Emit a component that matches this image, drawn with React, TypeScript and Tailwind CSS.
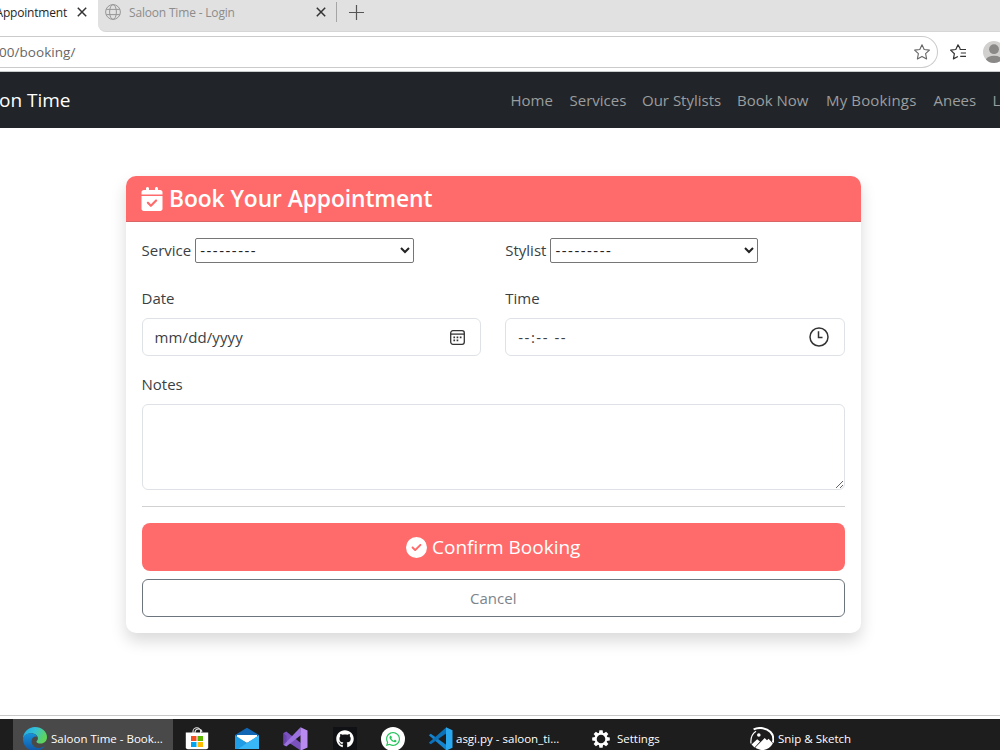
import type { ReactNode } from "react";
import { FaCalendarCheck, FaCircleCheck, FaGithub, FaWhatsapp } from "react-icons/fa6";

const NAV_LINKS = [
  { label: "Home", width: "w-[43px]" },
  { label: "Services", width: "w-[56.500px]" },
  { label: "Our Stylists", width: "w-[79px]" },
  { label: "Book Now", width: "w-[73px]" },
  { label: "My Bookings", width: "w-[91.500px] tracking-[0.150px]" },
  { label: "Anees", width: "w-[43px]" },
  { label: "L", width: "w-[10px]" },
];

function CloseIcon() {
  return (
    <svg className="h-[10px] w-[10px] shrink-0" viewBox="0 0 10 10" fill="none" stroke="#333" strokeWidth="1.5">
      <path d="M.8.8 9.2 9.2M9.2.8.8 9.2" />
    </svg>
  );
}

function GlobeIcon() {
  return (
    <svg className="h-4 w-4 shrink-0" viewBox="0 0 16 16" fill="none" stroke="#979797" strokeWidth="1">
      <circle cx="8" cy="8" r="7.4" />
      <ellipse cx="8" cy="8" rx="3.4" ry="7.4" />
      <path d="M1.2 5.4h13.6M1.2 10.6h13.6" />
    </svg>
  );
}

function TabStrip() {
  return (
    <div className="flex h-8 bg-white">
      <div className="flex h-8 w-[98px] shrink-0 items-start justify-end bg-white pr-[11px] text-[#1f1f1f]">
        <span className="mt-[4px] mr-[10px] text-[12px] leading-[18px] tracking-[-0.2px] whitespace-nowrap">Appointment</span>
        <span className="mt-[7px]">
          <CloseIcon />
        </span>
      </div>
      <div className="flex h-8 flex-1 items-start rounded-bl-[8px] border-b border-[#d6d6d6] bg-[#e1e1e1] pl-[7px]">
        <span className="mt-1">
          <GlobeIcon />
        </span>
        <span className="mt-[4px] ml-[8px] w-[187px] text-[12px] leading-[18px] tracking-[-0.180px] whitespace-nowrap text-[#8c8c8c]">
          Saloon Time - Login
        </span>
        <span className="mt-[7px]">
          <CloseIcon />
        </span>
        <span className="mt-[2px] ml-[10px] h-5 w-px bg-[#a5a5a5]" />
        <svg className="mt-[5px] ml-[12px] h-[15px] w-[15px]" viewBox="0 0 15 15" stroke="#555" strokeWidth="1.2">
          <path d="M7.5 0v15M0 7.5h15" />
        </svg>
      </div>
    </div>
  );
}

function AddressBar() {
  return (
    <div className="flex h-10 items-center border-b border-[#c9cccc] bg-white">
      <div className="mt-px flex h-8 w-[938px] shrink-0 items-center justify-between rounded-r-full border border-l-0 border-[#cbcbcb] pr-[7px]">
        <span className="mt-px -ml-px text-[13.500px] tracking-[0.050px] text-[#666]">00/booking/</span>
        <svg className="h-4 w-4" viewBox="0 0 16 16" fill="none" stroke="#666" strokeWidth="1.1" strokeLinejoin="round">
          <path d="m8 .8 2.2 4.7 5.2.6-3.8 3.6 1 5.2L8 12.4l-4.6 2.5 1-5.2L.6 6.1l5.2-.6L8 .8Z" />
        </svg>
      </div>
      <svg className="ml-3 h-4 w-[17px] shrink-0" viewBox="0 0 17 16" fill="none" stroke="#333" strokeWidth="1.2" strokeLinejoin="round">
        <path d="M10.3 4.9 8 .8 5.8 5.5.6 6.1l3.8 3.6-1 5.2 4.5-2.4M9.6 5.5h6.400M10.8 9h5.200M10.2 12.4h5.800" />
      </svg>
      <svg className="ml-4 h-[22px] w-[22px] shrink-0" viewBox="0 0 22 22">
        <circle cx="11" cy="11" r="11" fill="#d2d0ce" />
        <circle cx="11" cy="8.2" r="4.9" fill="#8b8988" />
        <path d="M2.9 18.4a8.6 5.6 0 0 1 16.2 0 11 11 0 0 1-16.2 0Z" fill="#8b8988" />
      </svg>
    </div>
  );
}

function Navbar() {
  return (
    <nav className="flex h-14 shrink-0 items-center bg-[#212529]">
      <span className="mt-px w-[510.500px] shrink-0 text-[19px] whitespace-nowrap text-white">
        <span className="-ml-px">on Time</span>
      </span>
      <div className="flex gap-4 text-[15px] whitespace-nowrap text-[#9b9d9e]">
        {NAV_LINKS.map((link) => (
          <a key={link.label} className={`${link.width} shrink-0`}>
            {link.label}
          </a>
        ))}
      </div>
    </nav>
  );
}

function SelectField({ label, width }: { label: string; width: string }) {
  return (
    <div className="flex h-[26px] items-center">
      <label className="mr-1">{label}</label>
      <select className={`${width} h-[25px] appearance-auto rounded-[2px] border border-[#767676] bg-white tracking-[1.500px] text-[#222]`}>
        <option>---------</option>
      </select>
    </div>
  );
}

function InputField({ label, icon, children }: { label: string; icon: ReactNode; children: ReactNode }) {
  return (
    <div>
      <label className="block h-8 leading-6">{label}</label>
      <div className="flex h-[38px] items-center justify-between rounded-[6px] border border-[#dee2e6] pr-[15px] pl-3">
        {children}
        {icon}
      </div>
    </div>
  );
}

function CalendarIcon() {
  return (
    <svg className="h-[15px] w-[15px]" viewBox="0 0 15 15" fill="none" stroke="#333" strokeWidth="1.3">
      <rect x=".7" y=".7" width="13.6" height="13.6" rx="2.2" />
      <path d="M.7 4.1h13.6" />
      <path d="M3.4 7.3h1.7M6.6 7.3h1.7M9.8 7.3h1.7M3.4 10.4h1.7M6.6 10.4h1.7" strokeWidth="1.8" />
    </svg>
  );
}

function ClockIcon() {
  return (
    <svg className="mb-[1px] h-5 w-5" viewBox="0 0 20 20" fill="none" stroke="#333" strokeWidth="1.5">
      <circle cx="10" cy="10" r="9" />
      <path d="M9.5 4.3v6.2h4" />
    </svg>
  );
}

function BookingCard() {
  return (
    <section className="h-[457px] w-[735px] overflow-hidden rounded-[10px] bg-white shadow-[0_8px_16px_rgba(0,0,0,0.15)]">
      <header className="flex h-[46px] items-center border-b border-[#d96666] bg-[#ff6b6b] pl-[15px] text-white">
        <FaCalendarCheck className="h-6 w-[22px]" />
        <h4 className="mt-px ml-[6px] text-[22.800px] font-semibold tracking-[-0.080px]">Book Your Appointment</h4>
      </header>
      <div className="pt-[15px] pr-4 pl-[15.500px] text-[15px] text-[#3b3f43]">
        <div className="grid grid-cols-2 gap-x-6">
          <SelectField label="Service" width="w-[219px]" />
          <SelectField label="Stylist" width="w-[208px]" />
        </div>
        <div className="mt-[23px] grid grid-cols-2 gap-x-6">
          <InputField label="Date" icon={<CalendarIcon />}>
            <span className="tracking-[0.120px]">mm/dd/yyyy</span>
          </InputField>
          <InputField label="Time" icon={<ClockIcon />}>
            <span className="tracking-[1.500px]">--:-- --</span>
          </InputField>
        </div>
        <label className="mt-4 block h-8 leading-6">Notes</label>
        <textarea className="block h-[86px] w-full resize-y rounded-[6px] border border-[#dee2e6]" />
        <hr className="my-4 border-[#cfd1d2]" />
        <button className="flex h-12 w-full items-center justify-center rounded-[8px] bg-[#ff6b6b] pt-px text-[19px] text-white">
          <FaCircleCheck className="mr-[5px] h-[21px] w-[21px]" />
          Confirm Booking
        </button>
        <button className="mt-2 h-[38px] w-full rounded-[6px] border border-[#6c757d] text-[#7b848b]">Cancel</button>
      </div>
    </section>
  );
}

function EdgeIcon() {
  return (
    <svg className="h-6 w-6 shrink-0" viewBox="0 0 24 24">
      <defs>
        <linearGradient id="edgeTop" x1="0" y1="0" x2="1" y2=".4">
          <stop offset="0" stopColor="#1ba7e0" />
          <stop offset=".5" stopColor="#35c1d8" />
          <stop offset="1" stopColor="#5fd35a" />
        </linearGradient>
        <linearGradient id="edgeBody" x1="0" y1="0" x2="0" y2="1">
          <stop offset="0" stopColor="#1693dc" />
          <stop offset="1" stopColor="#1255a4" />
        </linearGradient>
      </defs>
      <path d="M0 12C0 5.2 5.3 0 12 0s12 4.6 12 10c0 4.3-3 6.5-6.2 6.5-2.7 0-4.4-1-4.4-1.8 0-.7 1.5-1.2 1.5-3.2C14.9 8.5 12 6.3 8.3 6.3 3.6 6.3.6 8.9 0 12Z" fill="url(#edgeTop)" />
      <path d="M0 12c.6-3.4 3.6-5.8 7.7-5.8 3.3 0 5.5 1.6 6.5 3.4-3.2-.7-5.7 1.4-5.7 4.6 0 4.5 4.3 7.6 9 6.6 1.6-.3 3-1 4.3-2-2.2 3.3-5.6 5.2-9.8 5.2C5.3 24 0 18.7 0 12Z" fill="url(#edgeBody)" />
    </svg>
  );
}

function StoreIcon() {
  return (
    <svg className="h-6 w-6 shrink-0" viewBox="0 0 24 24">
      <path d="M8 6V4.5a3.8 3.8 0 0 1 7.6 0V6M10 6V4.8a3.6 3.6 0 0 1 7 0" fill="none" stroke="#e6e6e6" strokeWidth="1.1" />
      <path d="M.8 5.5h22.4v14.700a2 2 0 0 1-2 2H2.800a2 2 0 0 1-2-2Z" fill="#fff" />
      <path d="M6 9h5.500v5H6Z" fill="#f25022" />
      <path d="M12.500 9H18v5h-5.500Z" fill="#5bb400" />
      <path d="M6 15h5.500v5H6Z" fill="#00a4ef" />
      <path d="M12.500 15H18v5h-5.500Z" fill="#ffb900" />
    </svg>
  );
}

function MailIcon() {
  return (
    <svg className="h-6 w-6 shrink-0" viewBox="0 0 24 24">
      <path d="M0 8 12 .8 24 8v3H0Z" fill="#1066b5" />
      <path d="M2 8h20v3l-10 5L2 11Z" fill="#fff" />
      <path d="M0 8.300 12 16l12-7.700V22H0Z" fill="#1f9de7" />
      <path d="M24 8.300V22H3l9-6Z" fill="#38b6f5" />
    </svg>
  );
}

function VisualStudioIcon() {
  return (
    <svg className="h-6 w-[25px] shrink-0" viewBox="0 0 25 24">
      <path d="M.5 6 3.3 4.4 17.8 16v7.5L4 14.5.5 18Z" fill="#7b52bd" />
      <path d="M.5 18V6l3 2.7v6.6Z" fill="#6b43ad" />
      <path d="M3.3 19.6.5 18 17.5.3 18 8Z" fill="#9b72dd" />
      <path d="M17.5.3 24.5 3.5v17l-7 3.2Z" fill="#b98af0" />
    </svg>
  );
}

function VsCodeIcon() {
  return (
    <svg className="h-6 w-[25px] shrink-0" viewBox="0 0 25 24">
      <path d="M.8 8.3 2.8 6.7 18.5 18v5.5Z" fill="#1583cd" />
      <path d="M.8 15.7 18 .5v6L2.8 17.3Z" fill="#0b72b9" />
      <path d="M18 .3 24.5 3.3v17.4L18 23.7Z" fill="#29a8f0" />
    </svg>
  );
}

function GearIcon() {
  const teeth = [0, 45, 90, 135, 180, 225, 270, 315];
  return (
    <svg className="h-[18px] w-[18px] shrink-0" viewBox="0 0 18 18">
      <circle cx="9" cy="9" r="5.4" fill="none" stroke="#fff" strokeWidth="2.2" />
      {teeth.map((angle) => (
        <path key={angle} d="M7.4.2h3.2l.5 3.2H6.9Z" fill="#fff" transform={`rotate(${angle} 9 9)`} />
      ))}
    </svg>
  );
}

function SnipIcon() {
  return (
    <svg className="h-6 w-6 shrink-0" viewBox="0 0 24 24">
      <path d="M3.6 2.4C9.500-.2 16.500.8 20.500 5c2.600 2.800 3.400 6.500 2.400 10.500" fill="none" stroke="#fff" strokeWidth="2" />
      <path d="M6 4.200C2.500 6.500.4 11 1 16.500" fill="none" stroke="#fff" strokeWidth="1.200" />
      <circle cx="8.800" cy="8" r="1.800" fill="#fff" />
      <path d="m1.500 17.500 5.700-5.300 2.800 2.200-5.500 6Z" fill="#fff" />
      <path d="m5.300 20.600 9.400-9.600 2.300 2.200 1.600-1.400 4.300 4.700C19 23.500 11 25 5.300 20.600Z" fill="#fff" />
    </svg>
  );
}

function Taskbar() {
  return (
    <footer className="flex h-[31px] shrink-0 overflow-hidden bg-[#1d1d1d] pl-[13px] text-[11.500px] whitespace-nowrap text-white">
      <div className="flex h-10 w-[160px] shrink-0 items-center bg-[#494949] pl-[10px]">
        <EdgeIcon />
        <span className="ml-[4px]">Saloon Time - Book...</span>
      </div>
      <div className="flex h-10 items-center">
        <span className="ml-3">
          <StoreIcon />
        </span>
        <span className="ml-[26px]">
          <MailIcon />
        </span>
        <span className="ml-6">
          <VisualStudioIcon />
        </span>
        <span className="ml-[25px] flex h-6 w-6 items-center justify-center bg-[#101114]">
          <FaGithub className="h-[18px] w-[18px]" />
        </span>
        <span className="ml-6 flex h-6 w-6 items-center justify-center rounded-full bg-white">
          <FaWhatsapp className="h-[16px] w-[16px] text-[#25c45c]" />
        </span>
        <span className="ml-[23px]">
          <VsCodeIcon />
        </span>
        <span className="ml-[3px] w-[136px]">asgi.py - saloon_ti...</span>
        <GearIcon />
        <span className="ml-[7px] w-[133px]">Settings</span>
        <SnipIcon />
        <span className="ml-[4px]">Snip &amp; Sketch</span>
      </div>
    </footer>
  );
}

export default function App() {
  return (
    <div className="flex h-[750px] w-[1000px] flex-col overflow-hidden bg-white font-['Open_Sans',sans-serif]">
      <TabStrip />
      <AddressBar />
      <Navbar />
      <main className="flex-1 border-b border-[#c9c9c9] pt-12 pl-[126px]">
        <BookingCard />
      </main>
      <div className="h-[3px] shrink-0 bg-white" />
      <Taskbar />
    </div>
  );
}
